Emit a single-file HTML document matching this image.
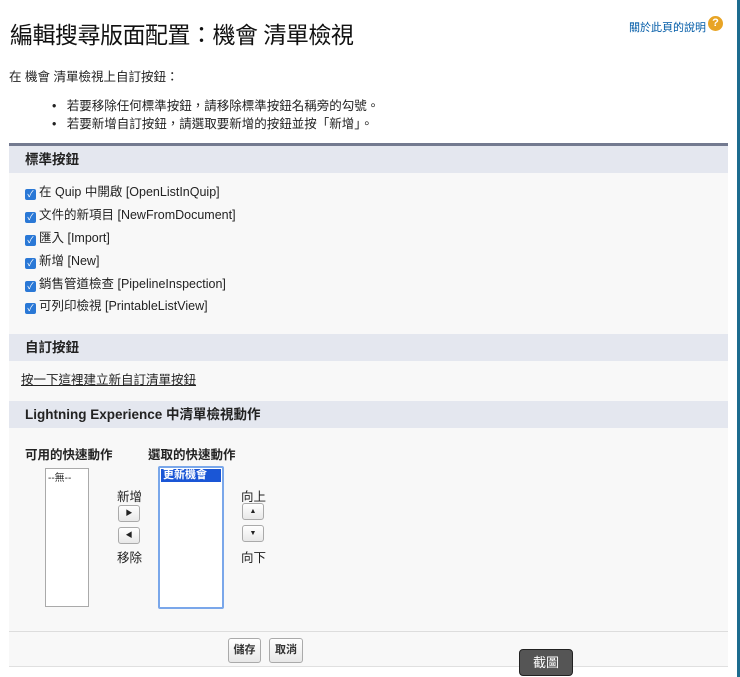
<!DOCTYPE html>
<html><head><meta charset="utf-8"><style>
body{margin:0;width:740px;height:677px;overflow:hidden;background:#fff;font-family:"Liberation Sans","Noto Sans CJK TC",sans-serif;color:#222;position:relative}
.a{position:absolute}
h1{position:absolute;left:10px;top:16px;margin:0;font-size:23px;font-weight:normal;color:#111;letter-spacing:-0.5px}
.help{left:629px;top:19px;font-size:11px;color:#015ba7}
.q{left:708px;top:16px;width:15px;height:15px;border-radius:50%;background:#e8a425;color:#fff;font-size:11px;font-weight:bold;text-align:center;line-height:15px}
.t{font-size:12.5px}
.panel{left:9px;top:143px;width:719px;height:524px;background:#f8f8f8;border-top:3px solid #737a90;border-bottom:1px solid #e0e0e0;box-sizing:border-box}
.hd{left:9px;width:719px;height:27px;background:#e4e7ef;font-size:13.5px;font-weight:bold;line-height:27px;padding-left:16px;box-sizing:border-box}
.cb{left:25px;font-size:12.5px;line-height:16px}
.cb i{display:inline-block;width:11px;height:11px;background:#2a78d6;border-radius:2px;vertical-align:-1px;margin-right:3px;color:#fff;font-size:9px;font-style:normal;text-align:center;line-height:11px}
.btn{background:linear-gradient(#fff,#e8e8e8);border:1px solid #aaa;border-radius:3px;box-sizing:border-box}
.sm{width:22px;height:17px;font-size:7px;text-align:center;line-height:15px;color:#222}
</style></head><body>
<div class="a" style="right:0;top:0;width:3px;height:677px;background:#1d6c8f"></div>
<h1>編輯搜尋版面配置：機會 清單檢視</h1>
<div class="a help">關於此頁的說明</div>
<div class="a q">?</div>
<div class="a t" style="left:9px;top:66px">在 機會 清單檢視上自訂按鈕：</div>
<div class="a t" style="left:52px;top:95px">•&nbsp;&nbsp;&nbsp;若要移除任何標準按鈕，請移除標準按鈕名稱旁的勾號。</div>
<div class="a t" style="left:52px;top:113px">•&nbsp;&nbsp;&nbsp;若要新增自訂按鈕，請選取要新增的按鈕並按「新增」。</div>
<div class="a panel"></div>
<div class="a hd" style="top:146px">標準按鈕</div>
<div class="a cb" style="top:184px"><i>✓</i>在 Quip 中開啟 [OpenListInQuip]</div>
<div class="a cb" style="top:207px"><i>✓</i>文件的新項目 [NewFromDocument]</div>
<div class="a cb" style="top:230px"><i>✓</i>匯入 [Import]</div>
<div class="a cb" style="top:253px"><i>✓</i>新增 [New]</div>
<div class="a cb" style="top:276px"><i>✓</i>銷售管道檢查 [PipelineInspection]</div>
<div class="a cb" style="top:298px"><i>✓</i>可列印檢視 [PrintableListView]</div>
<div class="a hd" style="top:334px">自訂按鈕</div>
<div class="a t" style="left:21px;top:369px;text-decoration:underline">按一下這裡建立新自訂清單按鈕</div>
<div class="a hd" style="top:401px">Lightning Experience 中清單檢視動作</div>
<div class="a t" style="left:25px;top:444px;font-weight:bold">可用的快速動作</div>
<div class="a t" style="left:148px;top:444px;font-weight:bold">選取的快速動作</div>
<div class="a" style="left:45px;top:468px;width:44px;height:139px;background:#fff;border:1px solid #aaa;box-sizing:border-box;font-size:10px;padding-left:2px">--無--</div>
<div class="a" style="left:158px;top:466px;width:66px;height:143px;background:#fff;border:2px solid #7aa7ea;border-radius:2px;box-sizing:border-box;padding:1px"><div style="background:#1a56d6;color:#fff;font-size:11px;font-weight:bold;line-height:13px;padding-left:2px">更新機會</div></div>
<div class="a t" style="left:117px;top:486px">新增</div>
<div class="a btn sm" style="left:118px;top:505px">▶</div>
<div class="a btn sm" style="left:118px;top:527px">◀</div>
<div class="a t" style="left:117px;top:547px">移除</div>
<div class="a t" style="left:241px;top:486px">向上</div>
<div class="a btn sm" style="left:242px;top:503px">▲</div>
<div class="a btn sm" style="left:242px;top:525px">▼</div>
<div class="a t" style="left:241px;top:547px">向下</div>
<div class="a" style="left:9px;top:631px;width:719px;height:1px;background:#ddd"></div>
<div class="a btn" style="left:228px;top:638px;width:33px;height:25px;font-size:11px;font-weight:bold;text-align:center;line-height:23px;color:#333">儲存</div>
<div class="a btn" style="left:269px;top:638px;width:34px;height:25px;font-size:11px;font-weight:bold;text-align:center;line-height:23px;color:#333">取消</div>
<div class="a" style="left:519px;top:649px;width:54px;height:27px;background:#555;border:1px solid #222;border-radius:4px;box-sizing:border-box;color:#fff;font-size:13px;text-align:center;line-height:25px">截圖</div>
</body></html>
